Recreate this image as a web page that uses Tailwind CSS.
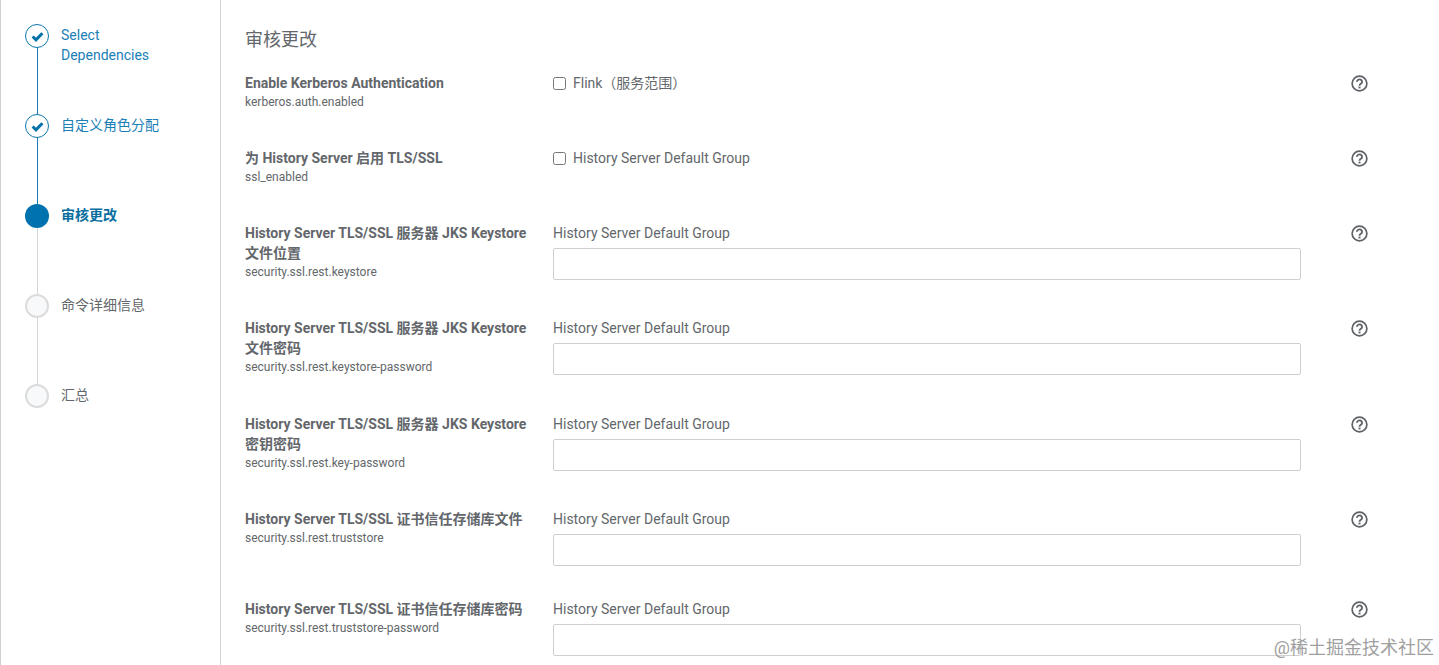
<!DOCTYPE html>
<html lang="zh">
<head>
    <meta charset="UTF-8">
    <title>审核更改</title>
    <script src="https://cdn.jsdelivr.net/npm/@tailwindcss/browser@4"></script>
</head>
<body class="bg-white overflow-hidden font-['Roboto','Noto_Sans_CJK_SC',sans-serif] text-sm text-[#63676b]">
    <div class="relative flex h-[665px] w-[1439px] overflow-hidden border-l border-[#d0d0d0]">
        <!-- steps -->
        <aside class="h-full w-[220px] shrink-0 border-r border-[#d4d4d4] pl-[24px] pt-[24px]">
            <div class="flex h-[90px] gap-[12px]">
                <div class="flex w-[24px] shrink-0 flex-col items-center">
                    <div class="flex size-[24px] shrink-0 items-center justify-center rounded-full border-[1.5px] border-[#0a76ad]">
                        <svg viewBox="0 0 12 12" class="size-[13px]" fill="none" stroke="#0072a8" stroke-width="2.8"><path d="M1.5 6 4.6 9 10.5 3"/></svg>
                    </div>
                    <div class="w-[1px] flex-1 bg-[#1a7fb5]"></div>
                </div>
                <div class="pt-[1px] leading-[20px] text-[#1a80b6]">Select<br>Dependencies</div>
            </div>
            <div class="flex h-[90px] gap-[12px]">
                <div class="flex w-[24px] shrink-0 flex-col items-center">
                    <div class="flex size-[24px] shrink-0 items-center justify-center rounded-full border-[1.5px] border-[#0a76ad]">
                        <svg viewBox="0 0 12 12" class="size-[13px]" fill="none" stroke="#0072a8" stroke-width="2.8"><path d="M1.5 6 4.6 9 10.5 3"/></svg>
                    </div>
                    <div class="w-[1px] flex-1 bg-[#1a7fb5]"></div>
                </div>
                <div class="leading-[22px] text-[#1a80b6]">自定义角色分配</div>
            </div>
            <div class="flex h-[90px] gap-[12px]">
                <div class="flex w-[24px] shrink-0 flex-col items-center">
                    <div class="size-[24px] shrink-0 rounded-full bg-[#0072ad]"></div>
                    <div class="w-[1px] flex-1 bg-[#d6d6d6]"></div>
                </div>
                <div class="font-bold leading-[22px] text-[#0a6f9f]">审核更改</div>
            </div>
            <div class="flex h-[90px] gap-[12px]">
                <div class="flex w-[24px] shrink-0 flex-col items-center">
                    <div class="size-[24px] shrink-0 rounded-full border-2 border-[#dcdcdc] bg-[#f8f9fa]"></div>
                    <div class="w-[1px] flex-1 bg-[#d6d6d6]"></div>
                </div>
                <div class="leading-[22px]">命令详细信息</div>
            </div>
            <div class="flex h-[90px] gap-[12px]">
                <div class="flex w-[24px] shrink-0 flex-col items-center">
                    <div class="size-[24px] shrink-0 rounded-full border-2 border-[#dcdcdc] bg-[#f8f9fa]"></div>
                </div>
                <div class="leading-[22px]">汇总</div>
            </div>
        </aside>

        <!-- review form -->
        <main class="flex-1 pl-[24px] pt-[27px]">
            <h2 class="mb-[20px] text-[18px] leading-[26px] font-normal">审核更改</h2>

            <div class="flex h-[75px]">
                <div class="w-[308px] shrink-0">
                    <div class="font-bold leading-[20px]">Enable Kerberos Authentication</div>
                    <div class="text-xs leading-[18px]">kerberos.auth.enabled</div>
                </div>
                <label class="flex h-[20px] w-[798px] shrink-0 items-center gap-[7px]"><input type="checkbox" class="size-[13px]">Flink（服务范围）</label>
                <svg viewBox="0 0 18 18" class="mt-[2px] size-[17px]" fill="none" stroke="#5f6368"><circle cx="9" cy="9" r="7.8" stroke-width="1.8"/><path d="M6.3 7.2a2.7 2.5 0 1 1 4.1 2.1c-.9.6-1.4 1-1.4 2" stroke-width="2"/><path d="M9 12.3v1.9" stroke-width="2.1"/></svg>
            </div>

            <div class="flex h-[75px]">
                <div class="w-[308px] shrink-0">
                    <div class="font-bold leading-[20px]">为 History Server 启用 TLS/SSL</div>
                    <div class="text-xs leading-[18px]">ssl_enabled</div>
                </div>
                <label class="flex h-[20px] w-[798px] shrink-0 items-center gap-[7px]"><input type="checkbox" class="size-[13px]">History Server Default Group</label>
                <svg viewBox="0 0 18 18" class="mt-[2px] size-[17px]" fill="none" stroke="#5f6368"><circle cx="9" cy="9" r="7.8" stroke-width="1.8"/><path d="M6.3 7.2a2.7 2.5 0 1 1 4.1 2.1c-.9.6-1.4 1-1.4 2" stroke-width="2"/><path d="M9 12.3v1.9" stroke-width="2.1"/></svg>
            </div>

            <div class="flex h-[95px]">
                <div class="w-[308px] shrink-0">
                    <div class="font-bold leading-[20px]">History Server TLS/SSL 服务器 JKS Keystore<br>文件位置</div>
                    <div class="text-xs leading-[18px]">security.ssl.rest.keystore</div>
                </div>
                <div class="w-[748px] shrink-0">
                    <div class="mb-[5px] leading-[20px]">History Server Default Group</div>
                    <input type="text" class="block h-[32px] w-full rounded-[2px] border border-[#cfcfcf] bg-white">
                </div>
                <svg viewBox="0 0 18 18" class="mt-[2px] ml-[50px] size-[17px]" fill="none" stroke="#5f6368"><circle cx="9" cy="9" r="7.8" stroke-width="1.8"/><path d="M6.3 7.2a2.7 2.5 0 1 1 4.1 2.1c-.9.6-1.4 1-1.4 2" stroke-width="2"/><path d="M9 12.3v1.9" stroke-width="2.1"/></svg>
            </div>

            <div class="flex h-[96px]">
                <div class="w-[308px] shrink-0">
                    <div class="font-bold leading-[20px]">History Server TLS/SSL 服务器 JKS Keystore<br>文件密码</div>
                    <div class="text-xs leading-[18px]">security.ssl.rest.keystore-password</div>
                </div>
                <div class="w-[748px] shrink-0">
                    <div class="mb-[5px] leading-[20px]">History Server Default Group</div>
                    <input type="text" class="block h-[32px] w-full rounded-[2px] border border-[#cfcfcf] bg-white">
                </div>
                <svg viewBox="0 0 18 18" class="mt-[2px] ml-[50px] size-[17px]" fill="none" stroke="#5f6368"><circle cx="9" cy="9" r="7.8" stroke-width="1.8"/><path d="M6.3 7.2a2.7 2.5 0 1 1 4.1 2.1c-.9.6-1.4 1-1.4 2" stroke-width="2"/><path d="M9 12.3v1.9" stroke-width="2.1"/></svg>
            </div>

            <div class="flex h-[95px]">
                <div class="w-[308px] shrink-0">
                    <div class="font-bold leading-[20px]">History Server TLS/SSL 服务器 JKS Keystore<br>密钥密码</div>
                    <div class="text-xs leading-[18px]">security.ssl.rest.key-password</div>
                </div>
                <div class="w-[748px] shrink-0">
                    <div class="mb-[5px] leading-[20px]">History Server Default Group</div>
                    <input type="text" class="block h-[32px] w-full rounded-[2px] border border-[#cfcfcf] bg-white">
                </div>
                <svg viewBox="0 0 18 18" class="mt-[2px] ml-[50px] size-[17px]" fill="none" stroke="#5f6368"><circle cx="9" cy="9" r="7.8" stroke-width="1.8"/><path d="M6.3 7.2a2.7 2.5 0 1 1 4.1 2.1c-.9.6-1.4 1-1.4 2" stroke-width="2"/><path d="M9 12.3v1.9" stroke-width="2.1"/></svg>
            </div>

            <div class="flex h-[90px]">
                <div class="w-[308px] shrink-0">
                    <div class="font-bold leading-[20px]">History Server TLS/SSL 证书信任存储库文件</div>
                    <div class="text-xs leading-[18px]">security.ssl.rest.truststore</div>
                </div>
                <div class="w-[748px] shrink-0">
                    <div class="mb-[5px] leading-[20px]">History Server Default Group</div>
                    <input type="text" class="block h-[32px] w-full rounded-[2px] border border-[#cfcfcf] bg-white">
                </div>
                <svg viewBox="0 0 18 18" class="mt-[2px] ml-[50px] size-[17px]" fill="none" stroke="#5f6368"><circle cx="9" cy="9" r="7.8" stroke-width="1.8"/><path d="M6.3 7.2a2.7 2.5 0 1 1 4.1 2.1c-.9.6-1.4 1-1.4 2" stroke-width="2"/><path d="M9 12.3v1.9" stroke-width="2.1"/></svg>
            </div>

            <div class="flex h-[90px]">
                <div class="w-[308px] shrink-0">
                    <div class="font-bold leading-[20px]">History Server TLS/SSL 证书信任存储库密码</div>
                    <div class="text-xs leading-[18px]">security.ssl.rest.truststore-password</div>
                </div>
                <div class="w-[748px] shrink-0">
                    <div class="mb-[5px] leading-[20px]">History Server Default Group</div>
                    <input type="text" class="block h-[32px] w-full rounded-[2px] border border-[#cfcfcf] bg-white">
                </div>
                <svg viewBox="0 0 18 18" class="mt-[2px] ml-[50px] size-[17px]" fill="none" stroke="#5f6368"><circle cx="9" cy="9" r="7.8" stroke-width="1.8"/><path d="M6.3 7.2a2.7 2.5 0 1 1 4.1 2.1c-.9.6-1.4 1-1.4 2" stroke-width="2"/><path d="M9 12.3v1.9" stroke-width="2.1"/></svg>
            </div>
        </main>

        <!-- watermark -->
        <div class="absolute right-[5px] bottom-[5px] text-[18px] leading-[24px] text-[#a0a0a0]">@稀土掘金技术社区</div>
    </div>
</body>
</html>
